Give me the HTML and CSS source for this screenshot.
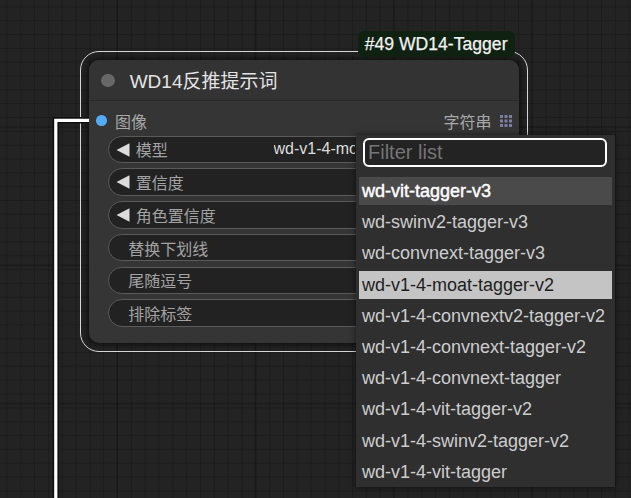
FILE: index.html
```html
<!DOCTYPE html>
<html lang="zh">
<head>
<meta charset="utf-8">
<title>WD14反推提示词</title>
<link rel="stylesheet" href="styles.css">
</head>
<body>
<div class="canvas">
  <div class="selection">
    <div class="badge">#49 WD14-Tagger</div>
    <div class="node">
      <div class="title"><span class="title-dot"></span><span class="title-text">WD14反推提示词</span></div>
      <div class="io">
        <div class="io-in"><span class="slot-dot"></span><span class="io-label">图像</span></div>
        <div class="io-out"><span class="io-label">字符串</span>
          <svg class="grid-icon" width="12" height="12" viewBox="0 0 12 12"><g fill="#7d7da0"><rect x="0" y="0" width="3" height="3"/><rect x="4.5" y="0" width="3" height="3"/><rect x="9" y="0" width="3" height="3"/><rect x="0" y="4.5" width="3" height="3"/><rect x="4.5" y="4.5" width="3" height="3"/><rect x="9" y="4.5" width="3" height="3"/><rect x="0" y="9" width="3" height="3"/><rect x="4.5" y="9" width="3" height="3"/><rect x="9" y="9" width="3" height="3"/></g></svg>
        </div>
      </div>
      <div class="widgets">
        <div class="widget arrowed">
          <svg class="arrow" width="14" height="14" viewBox="0 0 14 14"><polygon points="13.5,0.3 13.5,13.7 0.5,7" fill="#dcdcdc"/></svg>
          <span class="label">模型</span>
          <span class="value">wd-v1-4-moat-tagger-v2</span>
          <svg class="arrow arrow-r" width="14" height="14" viewBox="0 0 14 14"><polygon points="0.5,0.3 0.5,13.7 13.5,7" fill="#dcdcdc"/></svg>
        </div>
        <div class="widget arrowed">
          <svg class="arrow" width="14" height="14" viewBox="0 0 14 14"><polygon points="13.5,0.3 13.5,13.7 0.5,7" fill="#dcdcdc"/></svg>
          <span class="label">置信度</span>
          <svg class="arrow arrow-end" width="14" height="14" viewBox="0 0 14 14"><polygon points="0.5,0.3 0.5,13.7 13.5,7" fill="#dcdcdc"/></svg>
        </div>
        <div class="widget arrowed">
          <svg class="arrow" width="14" height="14" viewBox="0 0 14 14"><polygon points="13.5,0.3 13.5,13.7 0.5,7" fill="#dcdcdc"/></svg>
          <span class="label">角色置信度</span>
          <svg class="arrow arrow-end" width="14" height="14" viewBox="0 0 14 14"><polygon points="0.5,0.3 0.5,13.7 13.5,7" fill="#dcdcdc"/></svg>
        </div>
        <div class="widget toggle"><span class="label">替换下划线</span></div>
        <div class="widget toggle"><span class="label">尾随逗号</span></div>
        <div class="widget toggle"><span class="label">排除标签</span></div>
      </div>
    </div>
  </div>
  <svg class="link" width="631" height="498" viewBox="0 0 631 498">
    <path d="M 89 120.3 H 55.8 V 500" fill="none" stroke="#111" stroke-width="6.5"/>
    <path d="M 89 120.3 H 55.8 V 500" fill="none" stroke="#ffffff" stroke-width="3.2"/>
  </svg>
  <div class="menu">
    <input class="filter" type="text" placeholder="Filter list">
    <div class="item active">wd-vit-tagger-v3</div>
    <div class="item">wd-swinv2-tagger-v3</div>
    <div class="item">wd-convnext-tagger-v3</div>
    <div class="item selected">wd-v1-4-moat-tagger-v2</div>
    <div class="item">wd-v1-4-convnextv2-tagger-v2</div>
    <div class="item">wd-v1-4-convnext-tagger-v2</div>
    <div class="item">wd-v1-4-convnext-tagger</div>
    <div class="item">wd-v1-4-vit-tagger-v2</div>
    <div class="item">wd-v1-4-swinv2-tagger-v2</div>
    <div class="item">wd-v1-4-vit-tagger</div>
  </div>
</div>
</body>
</html>
```
FILE: styles.css
```css
html, body {
  margin: 0;
  padding: 0;
}
body {
  width: 631px;
  height: 498px;
  overflow: hidden;
  font-family: "Liberation Sans", "Noto Sans CJK SC", sans-serif;
  background-color: #232323;
  background-image:
    linear-gradient(to right, rgba(0,0,0,0.16) 2px, transparent 2px),
    linear-gradient(to bottom, rgba(0,0,0,0.16) 2px, transparent 2px),
    linear-gradient(to right, #1c1c1c 1px, transparent 1px),
    linear-gradient(to bottom, #1c1c1c 1px, transparent 1px);
  background-size: 138.3px 138.3px, 138.3px 138.3px, 13.83px 13.83px, 13.83px 13.83px;
  background-position: 116px 0, 0 126px, 6.4px 6.4px, 6.4px 6.4px;
}
.canvas {
  position: relative;
  width: 631px;
  height: 498px;
}

/* node */
.selection {
  position: absolute;
  left: 80px;
  top: 51px;
  padding: 7.5px;
  border: 1.5px solid #d6d6d6;
  border-radius: 19px;
}
.badge {
  position: absolute;
  right: 12px;
  top: -21.5px;
  height: 26px;
  line-height: 26px;
  padding: 0 7px;
  background: #0f2111;
  border-radius: 6px;
  color: #f2f2f2;
  font-size: 17.6px;
  -webkit-text-stroke: 0.25px #f2f2f2;
  white-space: nowrap;
}
.node {
  width: 430.5px;
  height: 283.5px;
  background: #353535;
  border-radius: 10px;
  box-shadow: 0 0 5px 2px rgba(0,0,0,0.55);
  overflow: hidden;
}
.title {
  height: 40px;
  background: #333333;
  border-bottom: 1px solid #2a2a2a;
  display: flex;
  align-items: center;
}
.title-dot {
  width: 13.4px;
  height: 13.4px;
  border-radius: 50%;
  background: #676767;
  margin-left: 12.8px;
  margin-top: 1.4px;
}
.title-text {
  margin-left: 15px;
  font-size: 19px;
  color: #e4e4e4;
}
.io {
  height: 30px;
  padding-top: 5px;
  display: flex;
  align-items: center;
  justify-content: space-between;
}
.io-in, .io-out {
  display: flex;
  align-items: center;
}
.slot-dot {
  width: 10.6px;
  height: 10.6px;
  border-radius: 50%;
  background: #55aaf5;
  margin-left: 7.5px;
  margin-right: 8.4px;
}
.io-label {
  font-size: 16px;
  color: #a8a8a8;
}
.grid-icon {
  margin-left: 8px;
  margin-right: 7.5px;
}
.widgets {
  padding: 0 19.8px;
  display: flex;
  flex-direction: column;
  gap: 5.3px;
}
.widget {
  height: 27.5px;
  box-sizing: border-box;
  border: 1px solid #5a5a5a;
  border-radius: 14px;
  background: #222222;
  display: flex;
  align-items: center;
  font-size: 16px;
  white-space: nowrap;
}
.widget .label {
  color: #a3a3a3;
}
.widget .value {
  margin-left: auto;
  width: 81px;
  overflow: hidden;
  color: #dddddd;
}
.arrowed {
  padding-left: 6.7px;
  padding-right: 6.7px;
}
.arrowed .arrow {
  margin-top: 0.5px;
}
.arrowed .label {
  margin-left: 5.7px;
}
.arrowed .arrow-r {
  margin-left: 123px;
}
.arrowed .arrow-end {
  margin-left: auto;
}
.toggle {
  padding-left: 19px;
  padding-right: 16px;
}

/* link */
.link {
  position: absolute;
  left: 0;
  top: 0;
}

/* dropdown */
.menu {
  position: absolute;
  left: 356px;
  top: 135px;
  width: 259px;
  height: 352px;
  box-sizing: border-box;
  padding: 3px;
  background: #2f2f2f;
  box-shadow: 0 0 6px rgba(0,0,0,0.6);
}
.filter {
  display: block;
  box-sizing: border-box;
  width: 244px;
  height: 29px;
  margin: 0 4px 10px;
  padding: 0 0 0 3px;
  border: 2px solid #ffffff;
  border-radius: 6px;
  background: #232323;
  color: #dddddd;
  font-family: "Liberation Sans", sans-serif;
  font-size: 20px;
  outline: none;
}
.filter::placeholder {
  color: #757575;
}
.item {
  height: 28px;
  line-height: 28px;
  padding-left: 3px;
  margin-bottom: 3.2px;
  font-size: 18px;
  color: #cdcdcd;
  white-space: nowrap;
}
.item.active {
  background: #4a4a4a;
  color: #ffffff;
  -webkit-text-stroke: 0.45px #ffffff;
}
.item.selected {
  background: #c4c4c4;
  color: #1e1e1e;
}
```
